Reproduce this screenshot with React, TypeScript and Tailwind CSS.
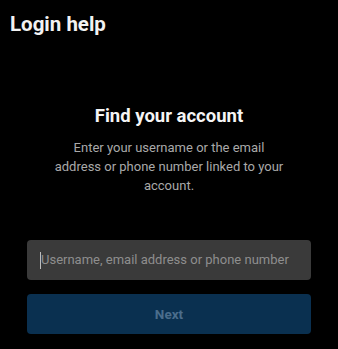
export default function App() {
  return (
    <div
      className="min-h-[349px] w-full bg-black text-white"
      style={{ fontFamily: 'Roboto, "Noto Sans", sans-serif' }}
    >
      <header className="px-[10px] pt-[12px]">
        <h1 className="text-[20.5px] font-bold leading-[24px] text-[#f2f2f2]">Login help</h1>
      </header>

      <main className="flex flex-col items-center px-[27px] pt-[69px]">
        <h2 className="text-[18.5px] font-bold leading-[22px] text-[#f5f5f5]">Find your account</h2>
        <p className="mt-[11px] w-[232px] text-center text-[13px] leading-[19px] text-[#a9a9a9]">
          Enter your username or the email address or phone number linked to your account.
        </p>

        <div className="mt-[45px] flex h-[40px] w-full items-center rounded-[4px] bg-[#3a3a3a] pl-[13px]">
          <span className="h-[17px] w-px bg-[#bdbdbd]" />
          <input
            className="w-full bg-transparent text-[13px] text-[#e0e0e0] outline-none placeholder:text-[#8e8e8e]"
            placeholder="Username, email address or phone number"
          />
        </div>

        <button className="mt-[14px] h-[40px] w-full rounded-[4px] bg-[#0a3050] text-[13.5px] font-bold text-[#4b6d8c]">
          Next
        </button>
      </main>
    </div>
  );
}
